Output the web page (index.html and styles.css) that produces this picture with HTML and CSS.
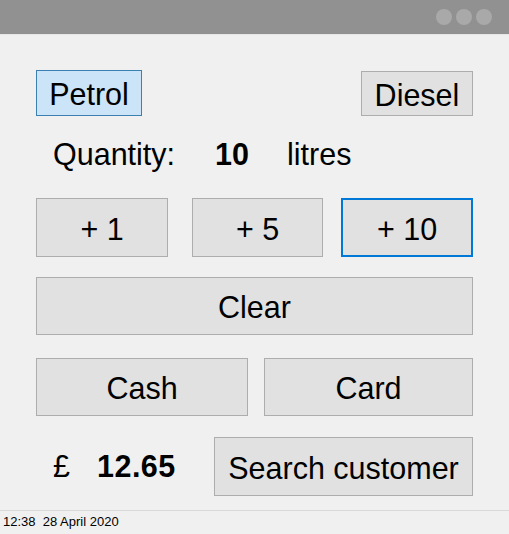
FILE: index.html
```html
<!DOCTYPE html>
<html>
<head>
<meta charset="utf-8">
<link rel="stylesheet" href="styles.css">
</head>
<body>
<div class="window">
  <div class="titlebar">
    <span class="dot"></span><span class="dot"></span><span class="dot"></span>
  </div>
  <div class="content">
    <div class="row fuel">
      <button class="btn selected petrol">Petrol</button>
      <button class="btn diesel">Diesel</button>
    </div>
    <div class="row qty">
      <span class="qlabel">Quantity:</span>
      <span class="qval">10</span>
      <span class="qunit">litres</span>
    </div>
    <div class="row adds">
      <button class="btn add1">+ 1</button>
      <button class="btn add5">+ 5</button>
      <button class="btn add10 focused">+ 10</button>
    </div>
    <div class="row">
      <button class="btn clear">Clear</button>
    </div>
    <div class="row pay">
      <button class="btn cash">Cash</button>
      <button class="btn card">Card</button>
    </div>
    <div class="row total">
      <span class="currency">£</span>
      <span class="amount">12.65</span>
      <button class="btn search">Search customer</button>
    </div>
  </div>
  <div class="statusbar">12:38&nbsp;&nbsp;28 April 2020</div>
</div>
</body>
</html>
```
FILE: styles.css
```css
html, body {
  margin: 0;
  padding: 0;
  background: #f0f0f0;
}
.window {
  width: 509px;
  height: 534px;
  display: flex;
  flex-direction: column;
  font-family: "Liberation Sans", Arial, sans-serif;
  color: #000;
}
.titlebar {
  height: 35px;
  background: #919191;
  border-bottom: 1px solid #e6e6e6;
  box-sizing: border-box;
  display: flex;
  justify-content: flex-end;
  align-items: center;
  gap: 4px;
  padding-right: 17px;
}
.dot {
  width: 16px;
  height: 16px;
  border-radius: 50%;
  background: #a9a9a9;
}
.content {
  flex: 1;
  padding: 35px 36px 0 36px;
  display: flex;
  flex-direction: column;
}
.row {
  display: flex;
  align-items: center;
}
.btn {
  font-family: "Liberation Sans", Arial, sans-serif;
  font-size: 30.5px;
  color: #000;
  background: #e1e1e1;
  border: 1px solid #adadad;
  margin: 0;
  padding: 3px 0 0 0;
  box-sizing: border-box;
  border-radius: 0;
}
.fuel {
  justify-content: space-between;
  align-items: flex-start;
}
.petrol {
  width: 106px;
  height: 46px;
  background: #cce4f7;
  border-color: #3c7fb1;
}
.diesel {
  width: 112px;
  height: 45px;
  margin-top: 1px;
}
.qty {
  height: 39px;
  margin-top: 19px;
  font-size: 30.5px;
}
.qlabel { margin-left: 17px; }
.qval { margin-left: 40px; font-weight: bold; }
.qunit { margin-left: 38px; }
.adds {
  margin-top: 24px;
}
.adds .btn { height: 59px; }
.add1 { width: 132px; }
.add5 { width: 131px; margin-left: 24px; }
.add10 { width: 132px; margin-left: 18px; }
.focused {
  border: 2px solid #0078d7;
}
.clear {
  width: 437px;
  height: 58px;
  margin-top: 20px;
}
.pay {
  margin-top: 23px;
  justify-content: space-between;
}
.pay .btn { height: 58px; }
.cash { width: 212px; }
.card { width: 209px; }
.total {
  margin-top: 21px;
  font-size: 30.5px;
}
.currency { margin-left: 17px; }
.amount { margin-left: 27px; font-weight: bold; letter-spacing: 0.5px; }
.search {
  width: 259px;
  height: 59px;
  margin-left: auto;
}
.statusbar {
  height: 24px;
  border-top: 1px solid #d9d9d9;
  box-sizing: border-box;
  font-size: 13px;
  line-height: 22px;
  padding-left: 3px;
}
```
